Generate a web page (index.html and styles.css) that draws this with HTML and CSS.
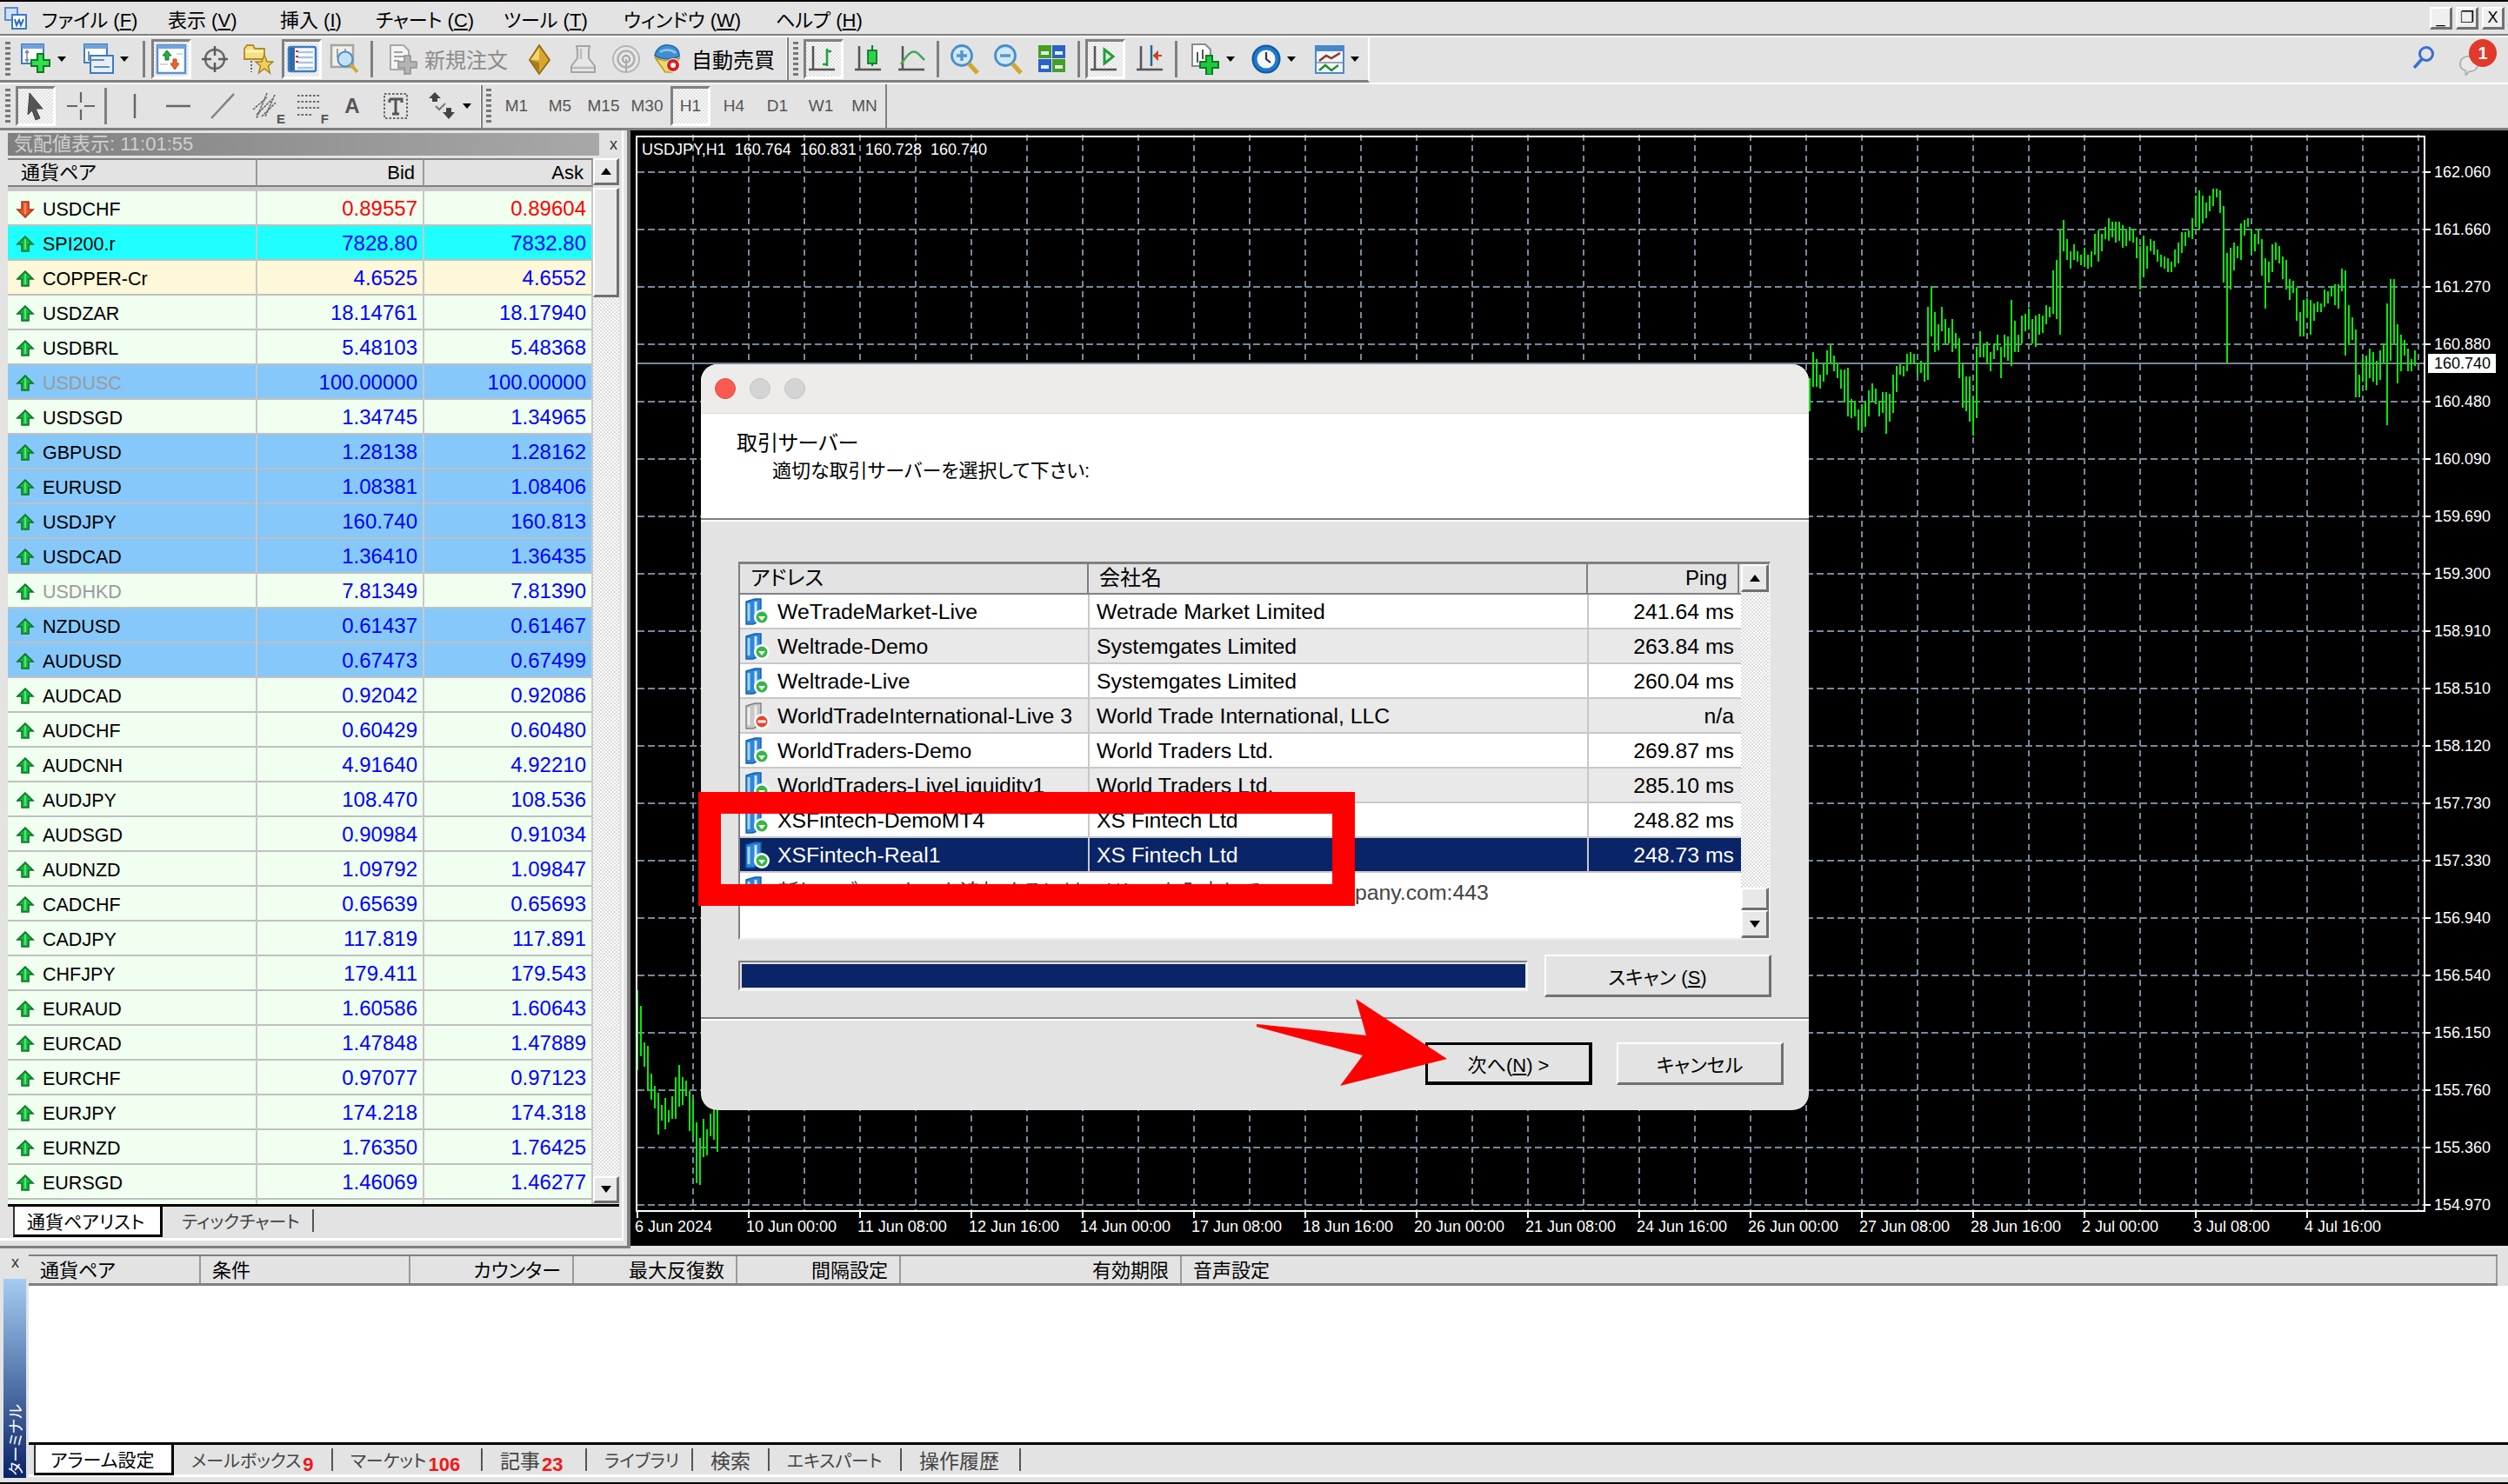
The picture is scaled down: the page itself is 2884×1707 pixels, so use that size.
FILE: index.html
```html
<!DOCTYPE html>
<html lang="ja">
<head>
    <meta charset="UTF-8">
    <title>MetaTrader 4</title>
    <link rel="stylesheet" href="styles.css">
</head>
<body>
    <!-- icon sprites -->
    <svg class="sprites" width="0" height="0">
        <symbol id="up" viewBox="0 0 22 20"><path d="M11 1 20 10H15V18H7V10H2Z" fill="#14b83c" stroke="#0a7426" stroke-width="1.6"/><path d="M11 4V16" stroke="#5fe07e" stroke-width="2"/></symbol>
        <symbol id="down" viewBox="0 0 22 20"><path d="M7 1H15V10H20L11 19 2 10H7Z" fill="#f0542a" stroke="#a83c14" stroke-width="1.6"/><path d="M11 3V15" stroke="#ff9a70" stroke-width="2"/></symbol>
        <symbol id="server" viewBox="0 0 30 32"><path d="M2 4 12 1H19V26L10 30H2Z" fill="#2e86d8" stroke="#1160ae" stroke-width="1.4"/><path d="M5 6V26" stroke="#a8d6f8" stroke-width="3"/><path d="M13 4V24" stroke="#cfe8fb" stroke-width="3"/><circle cx="20" cy="22" r="9" fill="#fff"/><circle cx="20" cy="22" r="6.5" fill="#38b548"/><path d="M16 21H24L20 26Z" fill="#fff"/></symbol>
        <symbol id="server-off" viewBox="0 0 30 32"><path d="M2 4 12 1H19V26L10 30H2Z" fill="#c8c8c8" stroke="#808080" stroke-width="1.4"/><path d="M5 6V26" stroke="#f0f0f0" stroke-width="3"/><path d="M13 4V24" stroke="#eee" stroke-width="3"/><circle cx="20" cy="22" r="9" fill="#fff"/><circle cx="20" cy="22" r="6.5" fill="#e8452c"/><path d="M15.500 20.500H24.500V23.500H15.500Z" fill="#fff"/></symbol>
        <symbol id="plus" viewBox="0 0 36 36"><path d="M19 12H26V19H33V26H26V33H19V26H12V19H19Z" fill="#2ee04e" stroke="#0a7c22" stroke-width="2"/></symbol>
        <symbol id="grey-plus" viewBox="0 0 36 36"><path d="M19 14H26V21H33V28H26V35H19V28H12V21H19Z" fill="#b4b4b4" stroke="#909090" stroke-width="1.500"/></symbol>
    </svg>

    <header class="menubar">
        <svg class="app-icon" viewBox="0 0 26 26"><rect x="1" y="1" width="14" height="14" fill="#cfe0fa" stroke="#5a8ad0" stroke-width="2"/><rect x="9" y="9" width="16" height="16" fill="#fff" stroke="#3a78c8" stroke-width="2"/><path d="M12 14 14 21 17 15 19 21 22 14" fill="none" stroke="#2a68c0" stroke-width="2"/></svg>
        <span class="menu-item m1">ファイル (<u>F</u>)</span>
        <span class="menu-item m2">表示 (<u>V</u>)</span>
        <span class="menu-item m3">挿入 (<u>I</u>)</span>
        <span class="menu-item m4">チャート (<u>C</u>)</span>
        <span class="menu-item m5">ツール (<u>T</u>)</span>
        <span class="menu-item m6">ウィンドウ (<u>W</u>)</span>
        <span class="menu-item">ヘルプ (<u>H</u>)</span>
        <div class="window-btns">
            <span class="win-btn">_</span>
            <span class="win-btn">&#x2750;</span>
            <span class="win-btn">X</span>
        </div>
    </header>

    <div class="toolrow">
        <div class="toolbar toolbar-main">
            <i class="grip"></i>
            <div class="slot drop">
                <svg viewBox="0 0 36 36"><rect x="1" y="1" width="25" height="22" fill="#fff" stroke="#3d7cc4" stroke-width="2"/><rect x="1" y="1" width="25" height="5" fill="#6fa4dc"/><path d="M7 9V20M5 11 7 8 9 11M5 18 7 21 9 18" fill="none" stroke="#7a8a9a" stroke-width="1.500"/><use href="#plus"/></svg>
                <i class="caret"></i>
            </div>
            <div class="slot drop ml2">
                <svg viewBox="0 0 36 36"><rect x="1" y="1" width="26" height="21" fill="#fff" stroke="#3d7cc4" stroke-width="2"/><rect x="1" y="1" width="26" height="5" fill="#6fa4dc"/><rect x="8" y="14" width="26" height="20" fill="#e6eef8" stroke="#3d7cc4" stroke-width="2"/><path d="M6 9V19H24M12 27H30" fill="none" stroke="#6a8aa8" stroke-width="1.800"/></svg>
                <i class="caret"></i>
            </div>
            <i class="sep ml6"></i>
            <div class="slot pressed ml3">
                <svg viewBox="0 0 36 36"><rect x="2" y="2" width="32" height="32" fill="#fff" stroke="#5b92d0" stroke-width="2.500"/><rect x="2" y="2" width="32" height="4" fill="#6fa4dc"/><path d="M8 14 13 8 18 14H15V19H11V14Z" fill="#22b040" stroke="#0e7a26"/><path d="M17 23H20V18H24V23H27L22 30Z" fill="#f0642c" stroke="#b84416"/><path d="M24 12H31M5 24H14" stroke="#c8c8c8" stroke-width="1.500"/></svg>
            </div>
            <div class="slot">
                <svg viewBox="0 0 36 36"><circle cx="18" cy="18" r="11" fill="none" stroke="#6a6a6a" stroke-width="2.500"/><path d="M18 3V14M18 22V33M3 18H14M22 18H33" stroke="#5a5a5a" stroke-width="2.500"/></svg>
            </div>
            <div class="slot">
                <svg viewBox="0 0 36 36"><path d="M2 6 5 2H12L14 6H25V18H2Z" fill="#f6de82" stroke="#b08c2a" stroke-width="1.800"/><path d="M3 9H24" stroke="#fff2b8" stroke-width="3"/><path d="M25 13 28 21H35L29.500 26 31.500 34 25 29 18.500 34 20.500 26 15 21H22Z" fill="#f2d054" stroke="#a88420" stroke-width="1.500"/><path d="M10 20V33" stroke="#555" stroke-width="1.800" stroke-dasharray="2 2"/></svg>
            </div>
            <div class="slot pressed">
                <svg viewBox="0 0 36 36"><rect x="3" y="4" width="31" height="28" rx="2" fill="#fff" stroke="#3d7cc4" stroke-width="2.500"/><rect x="4" y="5" width="6" height="26" fill="#2e6aa8"/><path d="M13 10H31M13 16H31M13 22H31M13 28H31" stroke="#a8c4ea" stroke-width="2.500"/><path d="M11 9H14M11 15H14M11 21H14" stroke="#e02020" stroke-width="2"/></svg>
            </div>
            <div class="slot">
                <svg viewBox="0 0 36 36"><rect x="2" y="2" width="25" height="25" fill="#f2f0ea" stroke="#a8a498" stroke-width="2.500"/><path d="M9 6V16M18 6V16" stroke="#888" stroke-width="1.500"/><circle cx="18" cy="18" r="8.500" fill="#c4e2f6" stroke="#4a8ec8" stroke-width="2"/><path d="M24 24 32 33" stroke="#d0a830" stroke-width="3.500"/></svg>
            </div>
            <i class="sep ml2"></i>
            <div class="slot text-slot ml7 muted">
                <svg viewBox="0 0 36 36"><path d="M3 2H18L24 8V30H3Z" fill="#f4f4f4" stroke="#a8a8a8" stroke-width="2"/><path d="M7 10H17M7 15H20M7 20H13" stroke="#a0a0a0" stroke-width="2"/><use href="#grey-plus"/></svg>
                <span>新規注文</span>
            </div>
            <div class="slot ml3">
                <svg viewBox="0 0 36 36"><path d="M18 2 30 19 18 35 7 19Z" fill="#d8a62c" stroke="#8c6a14" stroke-width="1.800"/><path d="M18 5 8 19H18Z" fill="#f2d470"/><path d="M18 35 8 19 18 22Z" fill="#a87c1c"/></svg>
            </div>
            <div class="slot">
                <svg viewBox="0 0 36 36"><path d="M11 3H26L25 8V17L32 26V33H5V26L12 17V8Z" fill="#e6e6e6" stroke="#a4a4a4" stroke-width="2"/><path d="M16 6V18M6 28H31" stroke="#bdbdbd" stroke-width="2.500"/></svg>
            </div>
            <div class="slot">
                <svg viewBox="0 0 36 36"><circle cx="18" cy="18" r="15" fill="#e8e8e8" stroke="#b4b4b4" stroke-width="2"/><circle cx="18" cy="18" r="9.500" fill="none" stroke="#b0b0b0" stroke-width="2.500"/><circle cx="18" cy="18" r="4" fill="none" stroke="#a0a0a0" stroke-width="2"/><path d="M18 18V33" stroke="#a8a8a8" stroke-width="2"/></svg>
            </div>
            <div class="slot text-slot auto-slot">
                <svg viewBox="0 0 36 36"><path d="M4 14C6 4 14 1 20 2 28 3 33 8 32 15 24 19 12 19 4 14Z" fill="#3f8ed0" stroke="#1d6aa8" stroke-width="1.500"/><path d="M10 10C16 6 24 7 28 11" fill="none" stroke="#8cc6f0" stroke-width="2.500"/><path d="M4 16C12 21 24 21 32 17L24 33H16Z" fill="#f2d860" stroke="#b89a28" stroke-width="1.500"/><circle cx="25" cy="25" r="7.500" fill="#d81e1e" stroke="#fff" stroke-width="1"/><circle cx="25" cy="25" r="3" fill="#fff"/></svg>
                <span>自動売買</span>
            </div>
            <i class="edge ml3"></i>
            <i class="grip ml1"></i>
            <div class="slot pressed ml2">
                <svg viewBox="0 0 36 36"><path d="M6 3V30M1 30H31" fill="none" stroke="#555" stroke-width="2.500"/><path d="M22 6V26M17 24H22M22 9H27" fill="none" stroke="#1ea03c" stroke-width="2.500"/></svg>
            </div>
            <div class="slot ml3">
                <svg viewBox="0 0 36 36"><path d="M6 3V30M1 30H31" fill="none" stroke="#555" stroke-width="2.500"/><path d="M21 2V26" stroke="#0e7a26" stroke-width="2"/><rect x="16" y="8" width="10" height="15" fill="#2ed24c" stroke="#0e7a26" stroke-width="1.800"/></svg>
            </div>
            <div class="slot">
                <svg viewBox="0 0 36 36"><path d="M6 3V30M1 30H31" fill="none" stroke="#555" stroke-width="2.500"/><path d="M4 24C12 12 18 4 26 14L31 19" fill="none" stroke="#4aa45c" stroke-width="2.500"/></svg>
            </div>
            <i class="sep"></i>
            <div class="slot ml3">
                <svg viewBox="0 0 36 36"><circle cx="14" cy="14" r="11.500" fill="#cfe8fa" stroke="#4a8ec8" stroke-width="2.800"/><path d="M14 8V20M8 14H20" stroke="#5a96cc" stroke-width="3.500"/><path d="M22 23 32 34" stroke="#d0a830" stroke-width="5"/></svg>
            </div>
            <div class="slot">
                <svg viewBox="0 0 36 36"><circle cx="14" cy="14" r="11.500" fill="#cfe8fa" stroke="#4a8ec8" stroke-width="2.800"/><path d="M8 14H20" stroke="#5a96cc" stroke-width="3.500"/><path d="M22 23 32 34" stroke="#d0a830" stroke-width="5"/></svg>
            </div>
            <div class="slot">
                <svg viewBox="0 0 36 36"><rect x="2" y="2" width="15" height="15" fill="#44a024"/><rect x="18" y="2" width="15" height="15" fill="#2a62c8"/><rect x="2" y="18" width="15" height="15" fill="#2a62c8"/><rect x="18" y="18" width="15" height="15" fill="#44a024"/><path d="M5 9H14V13H5ZM21 9H30V13H21ZM5 25H14V29H5ZM21 25H30V29H21Z" fill="#e6f0e6"/></svg>
            </div>
            <i class="sep ml2"></i>
            <div class="slot pressed ml2">
                <svg viewBox="0 0 36 36"><path d="M6 3V30M1 30H31" fill="none" stroke="#555" stroke-width="2.500"/><path d="M17 7V23L27 15Z" fill="none" stroke="#1ea03c" stroke-width="3"/></svg>
            </div>
            <div class="slot ml3">
                <svg viewBox="0 0 36 36"><path d="M6 3V30M1 30H31" fill="none" stroke="#555" stroke-width="2.500"/><path d="M18 2V26" stroke="#1d6aa0" stroke-width="2.500"/><path d="M20 14H30M21 14 25 10V18Z" fill="#c8441c" stroke="#c8441c" stroke-width="1.800"/></svg>
            </div>
            <i class="sep"></i>
            <div class="slot drop ml2">
                <svg viewBox="0 0 36 36"><path d="M3 1H18L24 7V26H3Z" fill="#fff" stroke="#8a8a8a" stroke-width="2"/><path d="M9 10V22M15 7V18" stroke="#555" stroke-width="2"/><path d="M19 14H26V21H33V28H26V36H19V28H12V21H19Z" fill="#1ec83e" stroke="#0a7c22" stroke-width="2"/></svg>
                <i class="caret"></i>
            </div>
            <div class="slot drop">
                <svg viewBox="0 0 36 36"><circle cx="18" cy="18" r="15.500" fill="#1f78cc" stroke="#125a9e" stroke-width="2"/><circle cx="18" cy="18" r="10.500" fill="#f4f6f8"/><path d="M18 10V18L23 22" fill="none" stroke="#333" stroke-width="2.200"/></svg>
                <i class="caret"></i>
            </div>
            <div class="slot drop ml3">
                <svg viewBox="0 0 36 36"><rect x="2" y="3" width="32" height="31" fill="#f2f4f8" stroke="#4a88cc" stroke-width="2"/><rect x="2" y="3" width="32" height="6" fill="#4a88cc"/><path d="M6 20 14 14 20 17 30 11" fill="none" stroke="#8a3a20" stroke-width="2.500"/><path d="M3 22H33" stroke="#9aa8b8" stroke-width="2"/><path d="M6 31 13 25 20 31 28 25" fill="none" stroke="#2a8a3a" stroke-width="2.500"/></svg>
                <i class="caret"></i>
            </div>
        </div>
        <div class="toolrow-right">
            <svg class="search-icon" viewBox="0 0 28 26"><circle cx="17" cy="9" r="7.500" fill="none" stroke="#3a6fd0" stroke-width="3"/><path d="M12 15 3 25" stroke="#3a6fd0" stroke-width="3.500"/></svg>
            <div class="notify">
                <svg class="bubble" viewBox="0 0 26 26"><path d="M13 2C20 2 24 6 24 12 24 18 19 21 13 21L9 26V20C4 18 2 15 2 12 2 6 6 2 13 2Z" fill="#e8e8e8" stroke="#b0b0b0" stroke-width="2"/></svg>
                <span class="badge">1</span>
            </div>
        </div>
    </div>

    <div class="toolrow toolrow-lower">
        <div class="toolbar toolbar-tools">
            <i class="grip"></i>
            <div class="slot pressed ml2">
                <svg viewBox="0 0 36 36"><path d="M11 3 26 21H18L23 32 18 34 14 23 9 28Z" fill="#555" stroke="#444"/></svg>
            </div>
            <div class="slot ml2">
                <svg viewBox="0 0 36 36"><path d="M18 2V14M18 22V34M2 18H14M22 18H34" stroke="#666" stroke-width="2.200"/></svg>
            </div>
            <i class="sep"></i>
            <div class="slot ml5">
                <svg viewBox="0 0 36 36"><path d="M18 4V32" stroke="#666" stroke-width="2.500"/></svg>
            </div>
            <div class="slot">
                <svg viewBox="0 0 36 36"><path d="M4 18H32" stroke="#666" stroke-width="2.500"/></svg>
            </div>
            <div class="slot">
                <svg viewBox="0 0 36 36"><path d="M6 32 32 4" stroke="#808080" stroke-width="2.500"/></svg>
            </div>
            <div class="slot">
                <svg viewBox="0 0 36 36"><path d="M4 22 20 8M8 28 26 10M14 30 30 14M20 3 8 32M29 5 18 30" fill="none" stroke="#666" stroke-width="1.600" stroke-dasharray="3 1"/></svg>
                <b class="tool-letter">E</b>
            </div>
            <div class="slot">
                <svg viewBox="0 0 36 36"><path d="M5 6H31M5 13H31M5 20H31M5 28H22" stroke="#666" stroke-width="2" stroke-dasharray="2.500 2"/></svg>
                <b class="tool-letter">F</b>
            </div>
            <div class="slot tool-a">A</div>
            <div class="slot">
                <svg viewBox="0 0 36 36"><path d="M5 4H31V32H5Z" fill="none" stroke="#666" stroke-width="2" stroke-dasharray="2.500 2"/><path d="M11 10H25V14M18 10V27M14 27H22M11 14V10" fill="none" stroke="#555" stroke-width="3"/></svg>
            </div>
            <div class="slot drop">
                <svg viewBox="0 0 36 36"><path d="M10 2 17 9H13V13H7V9H3Z" fill="#444"/><path d="M23 20H29V25H33L26 33 19 25H23Z" fill="#444"/><path d="M11 18 15 22 22 15" fill="none" stroke="#777" stroke-width="2"/></svg>
                <i class="caret"></i>
            </div>
            <i class="edge"></i>
            <i class="grip"></i>
            <div class="slot period ml2">M1</div>
            <div class="slot period">M5</div>
            <div class="slot period">M15</div>
            <div class="slot period">M30</div>
            <div class="slot period pressed">H1</div>
            <div class="slot period">H4</div>
            <div class="slot period">D1</div>
            <div class="slot period">W1</div>
            <div class="slot period">MN</div>
        </div>
    </div>

    <main class="workspace">
        <section class="market">
            <div class="market-title-row">
                <div class="market-title">気配値表示: 11:01:55</div>
                <span class="close-x">x</span>
            </div>
            <div class="market-list">
                <div class="market-table">
                    <div class="market-head">
                        <span>通貨ペア</span><span class="num">Bid</span><span class="num">Ask</span>
                    </div>
                    <div class="market-row"><span class="pair"><svg class="arrow"><use href="#down"/></svg>USDCHF</span><span class="num dn">0.89557</span><span class="num dn">0.89604</span></div>
                    <div class="market-row cyan"><span class="pair"><svg class="arrow"><use href="#up"/></svg>SPI200.r</span><span class="num">7828.80</span><span class="num">7832.80</span></div>
                    <div class="market-row cream"><span class="pair"><svg class="arrow"><use href="#up"/></svg>COPPER-Cr</span><span class="num">4.6525</span><span class="num">4.6552</span></div>
                    <div class="market-row"><span class="pair"><svg class="arrow"><use href="#up"/></svg>USDZAR</span><span class="num">18.14761</span><span class="num">18.17940</span></div>
                    <div class="market-row"><span class="pair"><svg class="arrow"><use href="#up"/></svg>USDBRL</span><span class="num">5.48103</span><span class="num">5.48368</span></div>
                    <div class="market-row sky"><span class="pair off"><svg class="arrow"><use href="#up"/></svg>USDUSC</span><span class="num">100.00000</span><span class="num">100.00000</span></div>
                    <div class="market-row"><span class="pair"><svg class="arrow"><use href="#up"/></svg>USDSGD</span><span class="num">1.34745</span><span class="num">1.34965</span></div>
                    <div class="market-row sky"><span class="pair"><svg class="arrow"><use href="#up"/></svg>GBPUSD</span><span class="num">1.28138</span><span class="num">1.28162</span></div>
                    <div class="market-row sky"><span class="pair"><svg class="arrow"><use href="#up"/></svg>EURUSD</span><span class="num">1.08381</span><span class="num">1.08406</span></div>
                    <div class="market-row sky"><span class="pair"><svg class="arrow"><use href="#up"/></svg>USDJPY</span><span class="num">160.740</span><span class="num">160.813</span></div>
                    <div class="market-row sky"><span class="pair"><svg class="arrow"><use href="#up"/></svg>USDCAD</span><span class="num">1.36410</span><span class="num">1.36435</span></div>
                    <div class="market-row"><span class="pair off"><svg class="arrow"><use href="#up"/></svg>USDHKD</span><span class="num">7.81349</span><span class="num">7.81390</span></div>
                    <div class="market-row sky"><span class="pair"><svg class="arrow"><use href="#up"/></svg>NZDUSD</span><span class="num">0.61437</span><span class="num">0.61467</span></div>
                    <div class="market-row sky"><span class="pair"><svg class="arrow"><use href="#up"/></svg>AUDUSD</span><span class="num">0.67473</span><span class="num">0.67499</span></div>
                    <div class="market-row"><span class="pair"><svg class="arrow"><use href="#up"/></svg>AUDCAD</span><span class="num">0.92042</span><span class="num">0.92086</span></div>
                    <div class="market-row"><span class="pair"><svg class="arrow"><use href="#up"/></svg>AUDCHF</span><span class="num">0.60429</span><span class="num">0.60480</span></div>
                    <div class="market-row"><span class="pair"><svg class="arrow"><use href="#up"/></svg>AUDCNH</span><span class="num">4.91640</span><span class="num">4.92210</span></div>
                    <div class="market-row"><span class="pair"><svg class="arrow"><use href="#up"/></svg>AUDJPY</span><span class="num">108.470</span><span class="num">108.536</span></div>
                    <div class="market-row"><span class="pair"><svg class="arrow"><use href="#up"/></svg>AUDSGD</span><span class="num">0.90984</span><span class="num">0.91034</span></div>
                    <div class="market-row"><span class="pair"><svg class="arrow"><use href="#up"/></svg>AUDNZD</span><span class="num">1.09792</span><span class="num">1.09847</span></div>
                    <div class="market-row"><span class="pair"><svg class="arrow"><use href="#up"/></svg>CADCHF</span><span class="num">0.65639</span><span class="num">0.65693</span></div>
                    <div class="market-row"><span class="pair"><svg class="arrow"><use href="#up"/></svg>CADJPY</span><span class="num">117.819</span><span class="num">117.891</span></div>
                    <div class="market-row"><span class="pair"><svg class="arrow"><use href="#up"/></svg>CHFJPY</span><span class="num">179.411</span><span class="num">179.543</span></div>
                    <div class="market-row"><span class="pair"><svg class="arrow"><use href="#up"/></svg>EURAUD</span><span class="num">1.60586</span><span class="num">1.60643</span></div>
                    <div class="market-row"><span class="pair"><svg class="arrow"><use href="#up"/></svg>EURCAD</span><span class="num">1.47848</span><span class="num">1.47889</span></div>
                    <div class="market-row"><span class="pair"><svg class="arrow"><use href="#up"/></svg>EURCHF</span><span class="num">0.97077</span><span class="num">0.97123</span></div>
                    <div class="market-row"><span class="pair"><svg class="arrow"><use href="#up"/></svg>EURJPY</span><span class="num">174.218</span><span class="num">174.318</span></div>
                    <div class="market-row"><span class="pair"><svg class="arrow"><use href="#up"/></svg>EURNZD</span><span class="num">1.76350</span><span class="num">1.76425</span></div>
                    <div class="market-row"><span class="pair"><svg class="arrow"><use href="#up"/></svg>EURSGD</span><span class="num">1.46069</span><span class="num">1.46277</span></div>
                    <div class="market-row"><span></span><span></span><span></span></div>
                </div>
                <div class="scrollbar market-scroll">
                    <span class="scroll-btn up"></span>
                    <span class="scroll-thumb"></span>
                    <span class="scroll-track"></span>
                    <span class="scroll-btn down"></span>
                </div>
            </div>
            <div class="tabs market-tabs">
                <span class="tab active">通貨ペアリスト</span>
                <span class="tab">ティックチャート</span>
            </div>
        </section>
        <section class="chart">
            <svg id="chartCanvas" class="chart-canvas" viewBox="725 150 2159 1283"></svg>
        </section>
    </main>

    <section class="terminal">
        <div class="terminal-side">
            <span class="close-x">x</span>
            <div class="terminal-strip"><span>ターミナル</span></div>
        </div>
        <div class="terminal-main">
            <div class="terminal-head">
                <span class="c1">通貨ペア</span>
                <span class="c2">条件</span>
                <span class="c3 num">カウンター</span>
                <span class="c3 num">最大反復数</span>
                <span class="c3 num">間隔設定</span>
                <span class="c4 num">有効期限</span>
                <span class="c5">音声設定</span>
            </div>
            <div class="terminal-body"></div>
            <div class="tabs terminal-tabs">
                <span class="tab active">アラーム設定</span>
                <span class="tab t183">メールボックス<b>9</b></span>
                <span class="tab t172">マーケット<b>106</b></span>
                <span class="tab t120 kanji">記事<b>23</b></span>
                <span class="tab t122">ライブラリ</span>
                <span class="tab t88 kanji">検索</span>
                <span class="tab t152">エキスパート</span>
                <span class="tab t137 kanji">操作履歴</span>
            </div>
        </div>
    </section>

    <!-- server wizard, floats over the chart -->
    <div class="dialog">
        <div class="dialog-title">
            <i class="light red"></i><i class="light"></i><i class="light"></i>
        </div>
        <div class="dialog-head">
            <h1>取引サーバー</h1>
            <p>適切な取引サーバーを選択して下さい:</p>
        </div>
        <div class="dialog-body">
            <div class="server-list">
                <div class="server-table">
                    <div class="server-header">
                        <span>アドレス</span><span>会社名</span><span class="num">Ping</span>
                    </div>
                    <div class="server-row"><span class="name"><svg class="srv"><use href="#server"/></svg>WeTradeMarket-Live</span><span>Wetrade Market Limited</span><span class="num">241.64 ms</span></div>
                    <div class="server-row alt"><span class="name"><svg class="srv"><use href="#server"/></svg>Weltrade-Demo</span><span>Systemgates Limited</span><span class="num">263.84 ms</span></div>
                    <div class="server-row"><span class="name"><svg class="srv"><use href="#server"/></svg>Weltrade-Live</span><span>Systemgates Limited</span><span class="num">260.04 ms</span></div>
                    <div class="server-row alt"><span class="name"><svg class="srv"><use href="#server-off"/></svg>WorldTradeInternational-Live 3</span><span>World Trade International, LLC</span><span class="num">n/a</span></div>
                    <div class="server-row"><span class="name"><svg class="srv"><use href="#server"/></svg>WorldTraders-Demo</span><span>World Traders Ltd.</span><span class="num">269.87 ms</span></div>
                    <div class="server-row alt"><span class="name"><svg class="srv"><use href="#server"/></svg>WorldTraders-LiveLiquidity1</span><span>World Traders Ltd.</span><span class="num">285.10 ms</span></div>
                    <div class="server-row"><span class="name"><svg class="srv"><use href="#server"/></svg>XSFintech-DemoMT4</span><span>XS Fintech Ltd</span><span class="num">248.82 ms</span></div>
                    <div class="server-row selected"><span class="name"><svg class="srv"><use href="#server"/></svg>XSFintech-Real1</span><span>XS Fintech Ltd</span><span class="num">248.73 ms</span></div>
                    <div class="server-add"><svg class="srv"><use href="#server"/></svg>新しいブローカーを追加するにはアドレスを入力して: mt4.company.com:443</div>
                </div>
                <div class="scrollbar server-scroll">
                    <span class="scroll-btn up"></span>
                    <span class="scroll-track"></span>
                    <span class="scroll-thumb"></span>
                    <span class="scroll-btn down"></span>
                </div>
            </div>
            <div class="scan-row">
                <div class="progress"><div class="progress-fill"></div></div>
                <button class="btn scan-btn">スキャン (<u>S</u>)</button>
            </div>
        </div>
        <div class="dialog-foot">
            <button class="btn default">次へ(<u>N</u>) &gt;</button>
            <button class="btn">キャンセル</button>
        </div>
    </div>

    <!-- red annotations -->
    <div class="mark-box"></div>
    <svg class="mark-arrow" viewBox="1445 1149 219 100"><polygon points="1445,1178 1571,1191 1559,1149 1664,1218 1541,1249 1567,1214 1445,1181" fill="#ff0000"/></svg>

    <script src="chart.js"></script>
</body>
</html>
```
FILE: styles.css
```css
* {
    box-sizing: border-box;
}
html, body {
    margin: 0;
    padding: 0;
}
body {
    position: relative;
    width: 2884px;
    height: 1707px;
    overflow: hidden;
    background-color: #e3e3e3;
    color: #000;
    font-family: "Liberation Sans", "Noto Sans CJK JP", sans-serif;
    font-size: 22px;
    font-feature-settings: "palt";
}
i, b {
    font-style: normal;
}
.sprites {
    position: absolute;
}
.num {
    text-align: right;
}

/* menu */
.menubar {
    display: flex;
    align-items: center;
    height: 41px;
    padding-left: 5px;
    border-top: 2px solid #000;
    border-bottom: 2px solid #808080;
}
.app-icon {
    width: 26px;
    height: 26px;
    margin-right: 17px;
}
.menu-item { white-space: nowrap; }
.m1 { width: 145px; }
.m2 { width: 129px; }
.m3 { width: 110px; }
.m4 { width: 147px; }
.m5 { width: 138px; }
.m6 { width: 175px; }
.window-btns {
    display: flex;
    gap: 4px;
    margin-left: auto;
    margin-right: 4px;
}
.win-btn {
    display: flex;
    align-items: center;
    justify-content: center;
    width: 26px;
    height: 26px;
    font-size: 18px;
    background-color: #efefef;
    border-right: 3px solid #707070;
    border-bottom: 3px solid #707070;
    border-left: 2px solid #fff;
    border-top: 2px solid #fff;
}

/* toolbars */
.toolrow {
    display: flex;
    align-items: flex-start;
    height: 54px;
    border-top: 2px solid #fff;
}
.toolrow-lower {
    height: 55px;
    border-bottom: 3px solid #808080;
}
.toolbar {
    display: flex;
    align-items: center;
    gap: 4px;
    height: 52px;
    padding-left: 6px;
}
.toolbar-main {
    width: 1575px;
    border-right: 2px solid #fff;
    border-bottom: 3px solid #808080;
}
.toolbar-tools {
    width: 1020px;
    height: 50px;
    border-right: 2px solid #808080;
}
.toolrow-right {
    position: relative;
    flex: 1;
    height: 46px;
}
.search-icon {
    position: absolute;
    left: 1198px;
    top: 10px;
    width: 28px;
    height: 26px;
}
.notify {
    position: absolute;
    left: 1252px;
    top: 2px;
    width: 46px;
    height: 44px;
}
.bubble {
    position: absolute;
    left: 0;
    top: 18px;
    width: 24px;
    height: 24px;
}
.badge {
    position: absolute;
    left: 12px;
    top: 0;
    width: 32px;
    height: 32px;
    border-radius: 50%;
    background-color: #e03a2a;
    color: #fff;
    font-size: 20px;
    font-weight: bold;
    text-align: center;
    line-height: 32px;
}
.grip {
    flex: none;
    width: 6px;
    height: 40px;
    background: repeating-linear-gradient(#777 0 3px, transparent 3px 6px);
}
.sep {
    flex: none;
    width: 3px;
    height: 42px;
    background-color: #808080;
}
.edge {
    flex: none;
    width: 3px;
    height: 49px;
    background-color: #808080;
    border-left: 1px solid #fff;
}
.slot {
    position: relative;
    flex: none;
    display: flex;
    align-items: center;
    justify-content: center;
    width: 46px;
    height: 46px;
}
.slot svg {
    flex: none;
    width: 36px;
    height: 36px;
}
.pressed {
    background: repeating-conic-gradient(#e3e3e3 0 25%, #f6f6f6 0 50%) 0 0 / 4px 4px;
    border-top: 3px solid #808080;
    border-left: 3px solid #808080;
    border-right: 3px solid #fff;
    border-bottom: 3px solid #fff;
}
.drop {
    justify-content: flex-start;
    gap: 6px;
    width: 66px;
    padding-left: 8px;
}
.caret {
    width: 0;
    height: 0;
    border-left: 5px solid transparent;
    border-right: 5px solid transparent;
    border-top: 6px solid #000;
}
.text-slot {
    justify-content: flex-start;
    gap: 6px;
    width: 150px;
    padding-left: 6px;
}
.auto-slot {
    padding-left: 2px;
    gap: 10px;
}
.text-slot span {
    font-size: 24px;
    letter-spacing: 0;
    white-space: nowrap;
}
.muted span {
    color: #8c8c8c;
}
.period {
    color: #555;
    font-size: 19px;
}
.tool-letter {
    position: absolute;
    right: 0;
    bottom: 0;
    color: #555;
    font-size: 15px;
}
.tool-a {
    color: #555;
    font-size: 24px;
    font-weight: bold;
}
.ml1 { margin-left: 1px; }
.ml2 { margin-left: 2px; }
.ml3 { margin-left: 3px; }
.ml5 { margin-left: 5px; }
.ml6 { margin-left: 6px; }
.ml7 { margin-left: 7px; }

/* main area */
.workspace {
    display: flex;
    height: 1286px;
}
.market {
    display: flex;
    flex-direction: column;
    flex: none;
    width: 725px;
    padding: 3px 9px 0;
    border-right: 4px solid #808080;
    border-bottom: 3px solid #808080;
    box-shadow: inset -4px -6px 0 #e3e3e3, inset -6px -9px 0 #fff;
}
.market-title-row {
    display: flex;
    align-items: center;
    height: 26px;
}
.market-title {
    width: 680px;
    height: 26px;
    padding-left: 7px;
    line-height: 26px;
    color: #d0d0d0;
    background: linear-gradient(to right, #808080, #a8a8a8);
}
.close-x {
    color: #333;
    font-size: 18px;
    line-height: 1;
    margin-left: 12px;
}
.market-list {
    display: flex;
    height: 1206px;
    margin-top: 3px;
    overflow: hidden;
    border-bottom: 3px solid #000;
}
.market-table {
    flex: none;
    width: 673px;
}
.market-head {
    display: grid;
    grid-template-columns: 287px 192px 194px;
    height: 38px;
    border-bottom: 5px solid #c8c8c8;
}
.market-head span {
    height: 33px;
    padding: 0 9px 0 15px;
    line-height: 30px;
    background-color: #e3e3e3;
    border-top: 2px solid #808080;
    border-right: 2px solid #9a9a9a;
    border-bottom: 2px solid #808080;
}
.market-row {
    display: grid;
    grid-template-columns: 287px 192px 194px;
    height: 40px;
    background-color: #f0fff0;
    border-bottom: 2px solid #c0c0c0;
    color: #0000ff;
    font-size: 24px;
    line-height: 40px;
}
.market-row span {
    padding-right: 6px;
    border-right: 2px solid #c8c8c8;
}
.market-row .pair {
    display: flex;
    align-items: center;
    padding-left: 9px;
    padding-top: 1px;
    color: #000;
    font-size: 21.500px;
}
.market-row .off {
    color: #9a9a9a;
}
.arrow {
    flex: none;
    width: 22px;
    height: 20px;
    margin-right: 9px;
}
.market-row .dn {
    color: #ff0000;
}
.market-row.cyan { background-color: #20ffff; }
.market-row.cream { background-color: #fcf8d8; }
.market-row.sky { background-color: #86c8fa; }

.scrollbar {
    display: flex;
    flex-direction: column;
    flex: none;
}
.market-scroll {
    width: 30px;
}
.scroll-btn {
    flex: none;
    display: flex;
    align-items: center;
    justify-content: center;
    height: 31px;
    background-color: #e8e8e8;
    border-top: 2px solid #fff;
    border-left: 2px solid #fff;
    border-right: 3px solid #707070;
    border-bottom: 3px solid #707070;
}
.scroll-btn.up::after {
    content: "";
    border-left: 6px solid transparent;
    border-right: 6px solid transparent;
    border-bottom: 8px solid #000;
}
.scroll-btn.down::after {
    content: "";
    border-left: 6px solid transparent;
    border-right: 6px solid transparent;
    border-top: 8px solid #000;
}
.scroll-thumb {
    flex: none;
    background-color: #e8e8e8;
    border-top: 2px solid #fff;
    border-left: 2px solid #fff;
    border-right: 3px solid #707070;
    border-bottom: 3px solid #707070;
}
.scroll-track {
    flex: 1;
    background: repeating-conic-gradient(#dcdcdc 0 25%, #fff 0 50%) 0 0 / 4px 4px;
}
.market-scroll .scroll-thumb {
    height: 126px;
    margin-top: 3px;
}
.market-scroll .scroll-btn.down {
    margin-bottom: 1px;
}

/* tabs */
.tabs {
    display: flex;
    color: #444;
}
.tab {
    flex: none;
    display: flex;
    align-items: center;
    height: 26px;
    margin-top: 4px;
    padding: 0 0 0 20px;
    border-right: 2px solid #555;
    font-size: 20px;
    white-space: nowrap;
}
.tab.kanji {
    font-size: 23px;
}
.tab.active {
    height: 35px;
    margin-top: 0;
    padding: 0 0 0 17px;
    background-color: #fff;
    color: #000;
    font-size: 21px;
    border-left: 2px solid #333;
    border-right: 3px solid #000;
    border-bottom: 3px solid #000;
}
.tab b {
    align-self: flex-end;
    margin-left: 2px;
    margin-bottom: -3px;
    color: #f01818;
    font-size: 22px;
    line-height: 20px;
}
.t183 { width: 183px; }
.t172 { width: 172px; }
.t120 { width: 120px; }
.t122 { width: 122px; }
.t88 { width: 88px; }
.t152 { width: 152px; }
.t137 { width: 137px; }
.market-tabs {
    height: 40px;
}
.market-tabs .tab {
    width: 174px;
    margin-top: 3px;
    padding-left: 22px;
}
.market-tabs .tab.active {
    width: 172px;
    margin-top: 0;
    margin-left: 6px;
    padding-left: 14px;
    height: 35px;
}

/* chart */
.chart {
    flex: 1;
    background-color: #000;
    border-bottom: 3px solid #e8e8e8;
}
.chart-canvas {
    display: block;
    width: 2159px;
    height: 1283px;
}
.chart-canvas text {
    fill: #fff;
    font-family: "Liberation Sans", sans-serif;
    font-size: 18px;
}
.chart-canvas text.price-now {
    fill: #000;
}
.chart-canvas text.symbol-line {
    word-spacing: 5px;
}

/* terminal */
.terminal {
    display: flex;
    height: 271px;
    border-bottom: 2px solid #000;
}
.terminal-side {
    display: flex;
    flex-direction: column;
    flex: none;
    width: 33px;
    padding: 7px 3px 5px 4px;
}
.terminal-side .close-x {
    height: 28px;
    margin-left: 9px;
}
.terminal-strip {
    flex: 1;
    display: flex;
    align-items: flex-end;
    justify-content: center;
    background: linear-gradient(#a4ccf2, #0a2468);
}
.terminal-strip span {
    writing-mode: vertical-rl;
    text-orientation: sideways;
    transform: rotate(180deg);
    padding-top: 3px;
    color: #fff;
    font-size: 18px;
}
.terminal-main {
    display: flex;
    flex-direction: column;
    flex: 1;
    padding-top: 7px;
}
.terminal-head {
    display: flex;
    height: 36px;
    width: 2839px;
    border-top: 2px solid #808080;
    border-bottom: 3px solid #808080;
}
.terminal-head span {
    padding: 0 13px;
    line-height: 33px;
    border-right: 2px solid #9a9a9a;
}
.terminal-head .c1 { width: 198px; }
.terminal-head .c2 { width: 241px; }
.terminal-head .c3 { width: 188px; }
.terminal-head .c4 { width: 323px; }
.terminal-head .c5 { flex: 1; }
.terminal-body {
    flex: 1;
    background-color: #fff;
}
.terminal-tabs {
    height: 46px;
    border-top: 3px solid #000;
    box-shadow: inset 0 -6px 0 #e3e3e3, inset 0 -9px 0 #fff;
}
.terminal-tabs .tab.active {
    margin-left: 6px;
    width: 161px;
}

/* dialog */
.dialog {
    position: absolute;
    left: 806px;
    top: 419px;
    display: flex;
    flex-direction: column;
    width: 1274px;
    height: 858px;
    overflow: hidden;
    border-radius: 19px;
    background-color: #e3e3e3;
}
.dialog-title {
    display: flex;
    align-items: center;
    gap: 16px;
    height: 57px;
    padding-left: 16px;
    background-color: #edecea;
    border-bottom: 1px solid #dcdcdc;
}
.light {
    width: 24px;
    height: 24px;
    border-radius: 50%;
    background-color: #d4d4d4;
    border: 1px solid #c4c4c4;
}
.light.red {
    background-color: #fa5a52;
    border-color: #e04a42;
}
.dialog-head {
    height: 122px;
    padding: 19px 0 0 41px;
    background-color: #fff;
    border-bottom: 2px solid #808080;
}
.dialog-head h1 {
    margin: 0;
    font-size: 24px;
    font-weight: normal;
    line-height: 30px;
}
.dialog-head p {
    margin: 2px 0 0 41px;
    font-size: 22px;
    line-height: 30px;
}
.dialog-body {
    height: 574px;
    padding: 46px 0 0 43px;
    border-top: 2px solid #fff;
    border-bottom: 2px solid #808080;
}
.server-list {
    display: flex;
    width: 1187px;
    height: 435px;
    background-color: #fff;
    border-top: 3px solid #808080;
    border-left: 2px solid #808080;
    border-right: 2px solid #f0f0f0;
    border-bottom: 2px solid #f0f0f0;
}
.server-table {
    flex: none;
    width: 1151px;
    overflow: hidden;
}
.server-header {
    display: grid;
    grid-template-columns: 401px 574px 174px;
    height: 35px;
    font-size: 24px;
    line-height: 31px;
    background-color: #e3e3e3;
    border-bottom: 2px solid #808080;
}
.server-header span {
    padding: 0 12px;
    border-right: 2px solid #808080;
}
.server-row {
    display: grid;
    grid-template-columns: 402px 574px 175px;
    height: 40px;
    font-size: 24.800px;
    line-height: 40px;
    background-color: #fff;
    border-bottom: 2px solid #c8c8c8;
}
.server-row span {
    padding: 0 8px;
    border-right: 2px solid #c8c8c8;
}
.server-row .num {
    border-right: 0;
}
.server-row.alt {
    background-color: #e9e9e9;
}
.server-row.selected {
    background-color: #0a2468;
    color: #fff;
}
.server-row .name {
    display: flex;
    align-items: center;
    padding-left: 5px;
}
.srv {
    flex: none;
    width: 30px;
    height: 32px;
    margin-right: 8px;
}
.server-add {
    display: flex;
    align-items: center;
    height: 40px;
    padding-left: 5px;
    color: #444;
    font-size: 24.800px;
    white-space: nowrap;
}
.server-scroll {
    width: 32px;
}
.server-scroll .scroll-btn {
    height: 32px;
}
.server-scroll .scroll-thumb {
    height: 26px;
}
.scan-row {
    display: flex;
    align-items: center;
    gap: 19px;
    margin-top: 17px;
    height: 49px;
}
.progress {
    width: 908px;
    height: 35px;
    padding: 2px 1px 1px 2px;
    border-top: 2px solid #808080;
    border-left: 2px solid #808080;
    border-right: 2px solid #f4f4f4;
    border-bottom: 3px solid #f4f4f4;
}
.progress-fill {
    height: 100%;
    background-color: #0a2468;
}
.btn {
    width: 192px;
    height: 49px;
    padding: 0;
    background-color: #e3e3e3;
    color: #000;
    font-family: inherit;
    font-size: 22px;
    font-feature-settings: inherit;
    border-top: 2px solid #fff;
    border-left: 2px solid #fff;
    border-right: 3px solid #707070;
    border-bottom: 3px solid #707070;
}
.scan-btn {
    width: 261px;
}
.btn.default {
    border: 3px solid #000;
    border-bottom-width: 4px;
    border-right-width: 4px;
}
.dialog-foot {
    display: flex;
    justify-content: flex-end;
    gap: 28px;
    flex: 1;
    padding: 25px 29px 0 0;
    border-top: 2px solid #fff;
}

/* annotations */
.mark-box {
    position: absolute;
    left: 803px;
    top: 911px;
    width: 755px;
    height: 131px;
    border: 25px solid #ff0000;
    border-left-width: 26px;
    border-right-width: 26px;
}
.mark-arrow {
    position: absolute;
    left: 1445px;
    top: 1149px;
    width: 219px;
    height: 100px;
}
```
FILE: chart.js
```javascript
var svg = document.getElementById('chartCanvas');
var NS = 'http://www.w3.org/2000/svg';

function add(tag, attrs, text) {
    var el = document.createElementNS(NS, tag);
    for (var key in attrs) {
        el.setAttribute(key, attrs[key]);
    }
    if (text) el.textContent = text;
    svg.appendChild(el);
    return el;
}

var prices = ['162.060', '161.660', '161.270', '160.880', '160.480', '160.090', '159.690',
    '159.300', '158.910', '158.510', '158.120', '157.730', '157.330', '156.940', '156.540',
    '156.150', '155.760', '155.360', '154.970'];
var times = ['6 Jun 2024', '10 Jun 00:00', '11 Jun 08:00', '12 Jun 16:00', '14 Jun 00:00',
    '17 Jun 08:00', '18 Jun 16:00', '20 Jun 00:00', '21 Jun 08:00', '24 Jun 16:00',
    '26 Jun 00:00', '27 Jun 08:00', '28 Jun 16:00', '2 Jul 00:00', '3 Jul 08:00', '4 Jul 16:00'];

// high/low of each bar, read off the chart. x = x0 + 4 * index, y = y0 + value / 3
var bars = [
    { x0: 733, y0: 1130, v: [[27,303],[81,255],[207,291],[219,375],[315,405],[357,435],[381,525],[423,477],[399,507],[441,483],[393,471],[327,471],[285,429],[327,423],[339,393],[375,513],[405,537],[483,693],[537,699],[471,603],[507,597],[453,531],[435,543],[435,585]] },
    { x0: 2081, y0: 330, v: [[315,430],[225,345],[249,345],[303,351],[267,327],[219,303],[201,267],[237,291],[263,315],[285,351],[285,399],[279,447],[387,453],[393,447],[423,495],[405,501],[393,483],[357,447],[333,393],[351,405],[393,447],[363,435],[363,507],[369,465],[303,435],[273,363],[267,303],[273,309],[231,291],[225,267],[231,267],[261,303],[255,297],[263,327],[69,321],[-3,171],[87,225],[129,219],[69,153],[111,195],[141,195],[111,225],[159,213],[177,315],[267,417],[309,429],[309,465],[381,513],[207,453],[153,243],[195,243],[189,267],[225,291],[195,249],[165,219],[207,315],[165,243],[171,255],[45,273],[117,225],[165,225],[99,195],[93,153]] },
    { x0: 2333, y0: 200, v: [[465,537],[501,585],[489,597],[483,555],[489,549],[453,519],[459,495],[333,483],[297,501],[195,555],[159,267],[225,297],[267,327],[243,297],[267,303],[279,315],[255,321],[279,327],[267,321],[207,279],[195,303],[207,267],[183,225],[153,231],[165,219],[165,237],[165,231],[177,255],[189,249],[183,231],[189,237],[219,291],[249,399],[213,357],[249,327],[225,267],[231,279],[261,303],[279,321],[285,327],[291,339],[303,339],[261,321],[237,309],[201,273],[201,249],[195,219],[153,225],[75,183],[57,195]] },
    { x0: 2533, y0: 200, v: [[75,171],[99,153],[75,129],[51,111],[51,81],[57,135],[111,375],[273,651],[255,399],[237,333],[249,291],[171,297],[159,213],[153,183],[189,279],[207,267],[189,243],[225,351],[291,465],[303,375],[243,339],[237,297],[249,309],[285,363],[297,399],[363,435],[369,411],[393,507],[477,561],[435,561],[429,495],[435,555],[447,507],[441,477],[447,477],[399,459],[405,447],[387,423],[381,453],[381,465],[327,405],[333,627],[453,591],[495,573],[537,771],[693,771],[633,717],[627,747],[603,705],[615,717],[645,729],[609,711],[585,651],[447,867],[363,645],[363,585],[519,723],[555,681],[573,627],[603,681],[639,681],[609,663]] }
];

var GRID = '#778899';
svg.setAttribute('shape-rendering', 'crispEdges');

// grid
for (var k = 0; k < 32; k++) {
    var gx = 797 + 64 * k;
    add('line', { x1: gx, y1: 155, x2: gx, y2: 1392, stroke: GRID, 'stroke-width': 2, 'stroke-dasharray': '7 5' });
}
prices.forEach(function (p, i) {
    var y = 198 + 66 * i;
    add('line', { x1: 733, y1: y, x2: 2787, y2: y, stroke: GRID, 'stroke-width': 2, 'stroke-dasharray': '8 4' });
    add('line', { x1: 2789, y1: y, x2: 2795, y2: y, stroke: '#fff', 'stroke-width': 2 });
    add('text', { x: 2799, y: y + 6 }, p);
});

// current price line
add('line', { x1: 733, y1: 418, x2: 2787, y2: 418, stroke: GRID, 'stroke-width': 2 });

// bars
var d = '';
bars.forEach(function (seg) {
    seg.v.forEach(function (b, i) {
        d += 'M' + (seg.x0 + 4 * i) + ' ' + (seg.y0 + b[0] / 3) + 'V' + (seg.y0 + b[1] / 3);
    });
});
add('path', { d: d, stroke: '#0ae60a', 'stroke-width': 2, fill: 'none' });

// frame, time axis and labels
add('rect', { x: 732, y: 157, width: 2056, height: 1236, fill: 'none', stroke: '#fff', 'stroke-width': 2 });
times.forEach(function (t, i) {
    var x = 733 + 128 * i;
    add('line', { x1: x, y1: 1394, x2: x, y2: 1401, stroke: '#fff', 'stroke-width': 2 });
    add('text', { x: x - 3, y: 1417 }, t);
});
add('rect', { x: 2792, y: 407, width: 78, height: 22, fill: '#fff' });
add('text', { x: 2799, y: 424, 'class': 'price-now' }, '160.740');
add('text', { x: 738, y: 178, 'class': 'symbol-line' }, 'USDJPY,H1 160.764 160.831 160.728 160.740');
```
